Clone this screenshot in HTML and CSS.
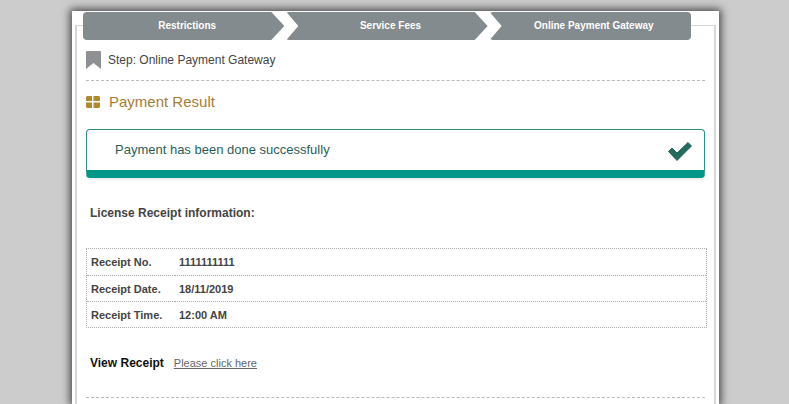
FILE: index.html
```html
<!DOCTYPE html>
<html lang="en">
<head>
  <meta charset="UTF-8">
  <meta name="viewport" content="width=device-width, initial-scale=1.0">
  <title>Payment Result</title>
  <link rel="stylesheet" href="styles.css">
</head>
<body>
  <main class="panel">
    <ol class="steps">
      <li class="step">Restrictions</li>
      <li class="step">Service Fees</li>
      <li class="step">Online Payment Gateway</li>
    </ol>

    <div class="frame">
      <div class="step-title">
        <svg class="icon-bookmark" viewBox="0 0 15 18" aria-hidden="true">
          <path d="M1 0h13a1 1 0 0 1 1 1v17l-7.500-6L0 18V1a1 1 0 0 1 1-1z" fill="#8f9094"/>
        </svg>
        <span>Step: Online Payment Gateway</span>
      </div>

      <h1 class="heading">
        <svg class="icon-grid" viewBox="0 0 14 12" aria-hidden="true">
          <path d="M1 0h5v5H0V1zM7.500 0H13l1 1v4H7.500zM0 6.500h6V12H1l-1-1zM7.500 6.500H14V11l-1 1H7.500z" fill="#b08a2e"/>
        </svg>
        <span>Payment Result</span>
      </h1>

      <div class="alert" role="status">
        <span>Payment has been done successfully</span>
        <svg class="icon-check" viewBox="0 0 24 19" aria-hidden="true">
          <path d="M0.500 9.500L4 6l5 5L20 0.500 23.500 4 9 18.500z" fill="#26695f" stroke="#26695f" stroke-linejoin="round"/>
        </svg>
      </div>

      <h2 class="subheading">License Receipt information:</h2>

      <table class="receipt">
        <tr>
          <th scope="row">Receipt No.</th>
          <td>1111111111</td>
        </tr>
        <tr>
          <th scope="row">Receipt Date.</th>
          <td>18/11/2019</td>
        </tr>
        <tr>
          <th scope="row">Receipt Time.</th>
          <td>12:00 AM</td>
        </tr>
      </table>

      <div class="view-receipt">
        <span class="view-label">View Receipt</span>
        <a href="#receipt">Please click here</a>
      </div>
    </div>
  </main>
</body>
</html>
```
FILE: styles.css
```css
* {
  box-sizing: border-box;
}
body {
  display: flex;
  min-height: 100vh;
  margin: 0;
  padding: 11px 70px 0 72px;
  background-color: #ccc;
  color: #444;
  font-family: "Liberation Sans", Arial, sans-serif;
  font-size: 11px;
}
.panel {
  display: flex;
  flex-direction: column;
  flex: 1;
  padding: 1px 3px 0;
  background-color: #fff;
  box-shadow: 0 0 8px 2px #444;
}

/* Step bar, overlaps the top edge of the frame */
.steps {
  display: grid;
  grid-template-columns: repeat(3, 1fr);
  gap: 2px;
  z-index: 1;
  margin: 0 25px 0 8px;
  padding: 0;
  background-color: #fff;
  list-style: none;
}
.step {
  padding-left: 7px;
  border-radius: 3px;
  background-color: #848b8e;
  color: #fff;
  font-size: 10px;
  font-weight: bold;
  line-height: 28px;
  text-align: center;
  clip-path: polygon(0 0, calc(100% - 13px) 0, 100% 50%, calc(100% - 13px) 100%, 0 100%, 12px 50%);
}
.step:first-child {
  border-radius: 4px 0 0 4px;
  clip-path: polygon(0 0, calc(100% - 13px) 0, 100% 50%, calc(100% - 13px) 100%, 0 100%);
}
.step:last-child {
  border-radius: 3px 4px 4px 3px;
  clip-path: polygon(0 0, 100% 0, 100% 100%, 0 100%, 12px 50%);
}

.frame {
  flex: 1;
  margin-top: -15px;
  padding: 25px 9px 0;
  border: 2px solid #d6d6d6;
  border-width: 1px 2px 0;
}
.step-title {
  display: flex;
  align-items: center;
  gap: 7px;
  height: 30px;
  padding-bottom: 11px;
  border-bottom: 1px dashed #bbb;
  font-size: 12px;
}
.icon-bookmark {
  width: 15px;
  height: 18px;
}
.heading {
  display: flex;
  align-items: center;
  gap: 9px;
  margin: 12px 0 18px;
  color: #a67c37;
  font-size: 15px;
  font-weight: normal;
  line-height: 18px;
}
.icon-grid {
  width: 14px;
  height: 12px;
}
.alert {
  display: flex;
  align-items: center;
  justify-content: space-between;
  height: 49px;
  padding: 0 12px 1px 28px;
  border: 1px solid #2b8e80;
  border-bottom: 8px solid #009688;
  border-radius: 4px;
  box-shadow: 0 2px 2px #eee;
  color: #2b5f59;
  font-size: 13px;
}
.icon-check {
  width: 24px;
  height: 19px;
  margin-top: 4px;
}
.subheading {
  margin: 26px 4px;
  font-size: 12px;
  line-height: 18px;
}
.receipt {
  width: calc(100% + 2px);
  border: 1px dotted #aaa;
  border-spacing: 0;
}
.receipt th,
.receipt td {
  height: 26px;
  padding: 0 4px;
  font-weight: bold;
  text-align: left;
}
.receipt tr + tr th,
.receipt tr + tr td {
  border-top: 1px dotted #aaa;
}
.receipt th {
  width: 88px;
}
.view-receipt {
  display: flex;
  align-items: center;
  gap: 10px;
  height: 70px;
  padding: 0 4px;
  border-bottom: 1px dashed #bbb;
}
.view-label {
  color: #111;
  font-size: 12px;
  font-weight: bold;
}
.view-receipt a {
  color: #666;
}
```
